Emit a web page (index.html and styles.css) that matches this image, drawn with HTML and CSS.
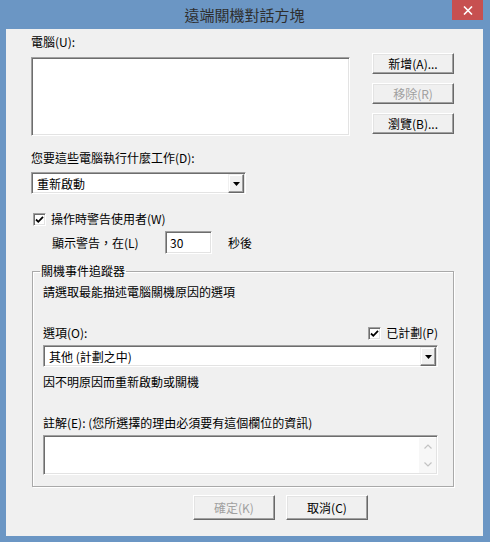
FILE: index.html
```html
<!DOCTYPE html>
<html lang="zh-Hant">
<head>
    <meta charset="UTF-8">
    <title>遠端關機對話方塊</title>
    <link rel="stylesheet" href="styles.css">
</head>
<body>
    <div class="window">
        <div class="titlebar">
            <span class="title">遠端關機對話方塊</span>
            <button class="close" title="關閉">
                <svg width="10" height="9" viewBox="0 0 10 9"><path d="M1 0.5 L9 8.5 M9 0.5 L1 8.5" stroke="#fff" stroke-width="1.6"/></svg>
            </button>
        </div>

        <div class="client">
            <div class="computers">
                <div class="computers-left">
                    <label class="label first">電腦(U):</label>
                    <div class="sunken listbox"></div>
                </div>
                <div class="side-buttons">
                    <button class="button">新增(A)...</button>
                    <button class="button disabled">移除(R)</button>
                    <button class="button">瀏覽(B)...</button>
                </div>
            </div>

            <label class="label action-label">您要這些電腦執行什麼工作(D):</label>
            <div class="sunken combo action-combo">
                <span class="combo-text">重新啟動</span>
                <span class="combo-arrow"><svg width="7" height="4" viewBox="0 0 7 4"><path d="M0 0 H7 L3.5 4 Z" fill="#000"/></svg></span>
            </div>

            <div class="check-row warn-check">
                <span class="sunken checkbox"><svg width="9" height="9" viewBox="0 0 9 9"><path d="M1 4.5 L3.3 6.8 L8 1.8" fill="none" stroke="#000" stroke-width="1.8"/></svg></span>
                <span>操作時警告使用者(W)</span>
            </div>

            <div class="warn-row">
                <span class="warn-label">顯示警告，在(L)</span>
                <div class="sunken seconds">30</div>
                <span class="warn-unit">秒後</span>
            </div>

            <fieldset class="group">
                <legend>關機事件追蹤器</legend>
                <div class="group-body">
                    <div class="label hint">請選取最能描述電腦關機原因的選項</div>

                    <div class="option-row">
                        <label class="label">選項(O):</label>
                        <div class="check-row">
                            <span class="sunken checkbox"><svg width="9" height="9" viewBox="0 0 9 9"><path d="M1 4.5 L3.3 6.8 L8 1.8" fill="none" stroke="#000" stroke-width="1.8"/></svg></span>
                            <span>已計劃(P)</span>
                        </div>
                    </div>
                    <div class="sunken combo option-combo">
                        <span class="combo-text">其他 (計劃之中)</span>
                        <span class="combo-arrow"><svg width="7" height="4" viewBox="0 0 7 4"><path d="M0 0 H7 L3.5 4 Z" fill="#000"/></svg></span>
                    </div>

                    <div class="label reason">因不明原因而重新啟動或關機</div>

                    <label class="label comment-label">註解(E): (您所選擇的理由必須要有這個欄位的資訊)</label>
                    <div class="sunken comment">
                        <div class="scrollbar">
                            <span class="scroll-btn"><svg width="8" height="5" viewBox="0 0 8 5"><path d="M0.5 4.5 L4 1 L7.5 4.5" fill="none" stroke="#c3c3c3" stroke-width="1.2"/></svg></span>
                            <span class="scroll-btn"><svg width="8" height="5" viewBox="0 0 8 5"><path d="M0.5 0.5 L4 4 L7.5 0.5" fill="none" stroke="#c3c3c3" stroke-width="1.2"/></svg></span>
                        </div>
                    </div>
                </div>
            </fieldset>

            <div class="footer">
                <button class="button tall disabled">確定(K)</button>
                <button class="button tall">取消(C)</button>
            </div>
        </div>
    </div>
</body>
</html>
```

FILE: styles.css
```css
body {
    margin: 0;
    background: #6b96c4;
}
.window {
    width: 490px;
    height: 542px;
    box-sizing: border-box;
    padding: 0 7px 6px 6px;
    background: #6b96c4;
    display: flex;
    flex-direction: column;
    font-family: "Noto Sans CJK TC", "Noto Sans", sans-serif;
    font-size: 12px;
    color: #000;
}
.titlebar {
    height: 29px;
    display: grid;
    grid-template-columns: 1fr auto 1fr;
}
.title {
    grid-column: 2;
    font-size: 15px;
    line-height: 29px;
    color: #2e2e2e;
}
.close {
    grid-column: 3;
    justify-self: end;
    width: 31px;
    height: 20px;
    padding: 0;
    border: none;
    background: #c75050;
    display: flex;
    align-items: center;
    justify-content: center;
}
.client {
    flex: 1;
    background: #f0f0f0;
    padding-left: 25px;
}
.label {
    display: block;
    line-height: 16px;
}
.first {
    margin-top: 5px;
}
.sunken {
    box-sizing: border-box;
    background: #fff;
    border: 1px solid;
    border-color: #a0a0a0 #fff #fff #a0a0a0;
    box-shadow: inset 1px 1px 0 #6d6d6d, inset -1px -1px 0 #e3e3e3;
}
.button {
    box-sizing: border-box;
    width: 82px;
    height: 21px;
    padding: 0;
    font-family: inherit;
    font-size: 12px;
    color: #000;
    background: #f0f0f0;
    border: 1px solid;
    border-color: #fff #696969 #696969 #fff;
    box-shadow: inset -1px -1px 0 #a0a0a0, inset 1px 1px 0 #e3e3e3;
}
.button.tall {
    height: 25px;
}
.button.disabled {
    color: #a0a0a0;
}

/* computers */
.computers {
    display: flex;
    align-items: flex-start;
}
.listbox {
    margin-top: 7px;
    width: 319px;
    height: 79px;
}
.side-buttons {
    margin-left: 22px;
    margin-top: 24px;
    display: flex;
    flex-direction: column;
    gap: 9px;
}

/* combo boxes */
.combo {
    height: 22px;
    display: flex;
    align-items: center;
    padding: 2px 1px 1px 5px;
}
.combo-text {
    flex: 1;
    line-height: 16px;
}
.combo-arrow {
    box-sizing: border-box;
    width: 16px;
    height: 19px;
    display: flex;
    align-items: center;
    justify-content: center;
    background: #f0f0f0;
    border: 1px solid;
    border-color: #f0f0f0 #696969 #696969 #f0f0f0;
    box-shadow: inset -1px -1px 0 #a0a0a0, inset 1px 1px 0 #fff;
}
.action-label {
    margin-top: 14px;
}
.action-combo {
    margin-top: 6px;
    width: 215px;
}

/* warning */
.check-row {
    display: flex;
    align-items: center;
    gap: 5px;
    line-height: 16px;
}
.checkbox {
    width: 13px;
    height: 13px;
    display: flex;
    align-items: center;
    justify-content: center;
}
.warn-check {
    margin-top: 17px;
    margin-left: 2px;
}
.warn-row {
    margin-top: 4px;
    padding-left: 21px;
    display: flex;
    align-items: center;
    line-height: 16px;
}
.warn-label {
    width: 113px;
}
.seconds {
    width: 47px;
    height: 23px;
    padding: 3px 0 0 4px;
    line-height: 16px;
}
.warn-unit {
    margin-left: 16px;
}

/* tracker group */
.group {
    margin: 9px 0 0 1px;
    padding: 0;
    width: 422px;
    box-sizing: border-box;
    border: 1px solid #a9a9a9;
    box-shadow: inset 1px 1px 0 #fff, 1px 1px 0 #fff;
}
.group legend {
    margin-left: 7px;
    padding: 0 1px;
    line-height: 16px;
}
.group-body {
    padding: 0 0 11px 10px;
}
.hint {
    margin-top: 5px;
}
.option-row {
    margin-top: 25px;
    width: 395px;
    display: flex;
    justify-content: space-between;
    align-items: center;
}
.option-combo {
    margin-top: 4px;
    width: 395px;
}
.reason {
    margin-top: 7px;
}
.comment-label {
    margin-top: 25px;
}
.comment {
    margin-top: 4px;
    width: 395px;
    height: 40px;
    display: flex;
    justify-content: flex-end;
    padding: 2px 1px 1px 2px;
}
.scrollbar {
    width: 17px;
    display: flex;
    flex-direction: column;
    justify-content: space-between;
    background: #f7f7f7;
}
.scroll-btn {
    height: 17px;
    display: flex;
    align-items: center;
    justify-content: center;
}

/* footer */
.footer {
    margin-top: 8px;
    padding-left: 162px;
    display: flex;
    gap: 11px;
}
```
